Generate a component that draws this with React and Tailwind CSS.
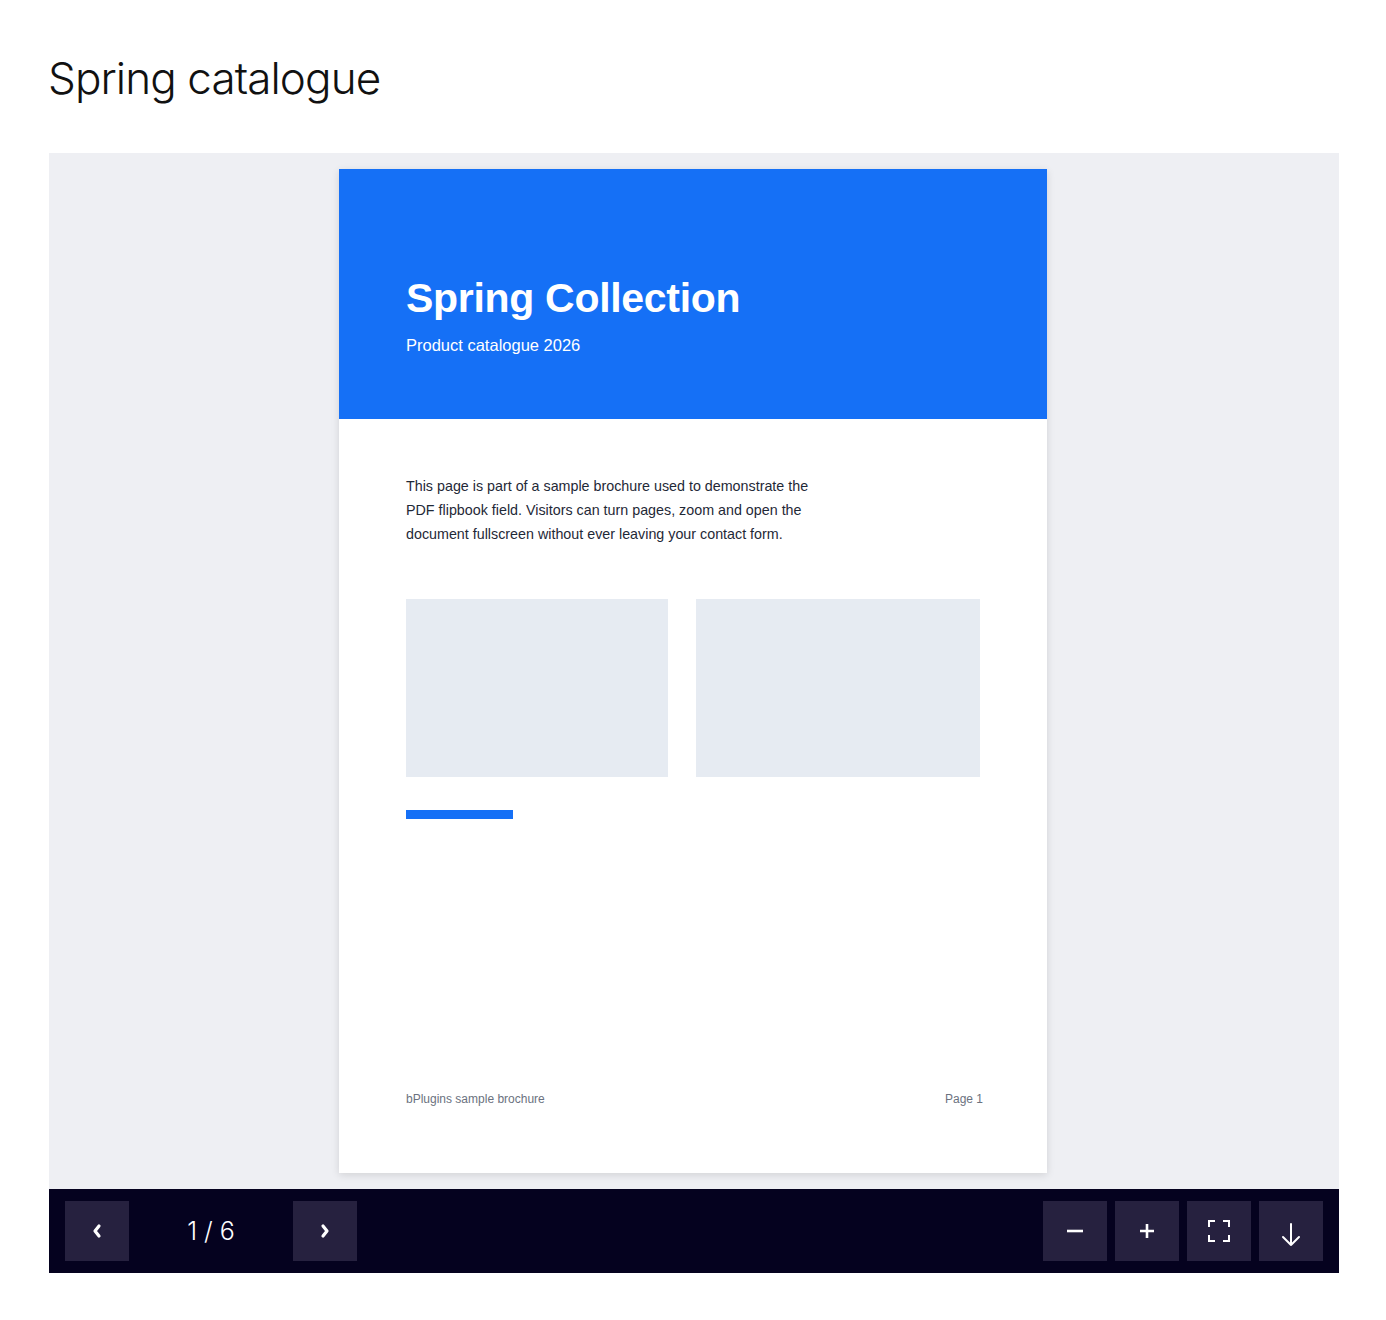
import React from "react";

const Btn = ({ children }) => (
  <button className="w-16 h-[60px] bg-[#26213f] flex items-center justify-center text-white">
    {children}
  </button>
);

export default function App() {
  return (
    <div className="bg-white min-h-[1320px] px-[49px] pt-[50px]" style={{ fontFamily: "Inter, sans-serif" }}>
      <h1 className="text-[44px] font-light text-[#111] leading-[56px] tracking-[-0.9px] -ml-[1px]">Spring catalogue</h1>
      <div className="mt-[47px] w-[1290px]">
        <div className="bg-[#eeeff3] h-[1036px] py-4 pr-[2px] flex justify-center">
          <div className="w-[708px] h-[1004px] bg-white shadow-[0_2px_8px_rgba(0,0,0,0.12)] flex flex-col" style={{ fontFamily: "'Liberation Sans', Arial, sans-serif" }}>
            <div className="h-[250px] bg-[#1570f6] pl-[67px] pt-[104px] text-white">
              <div className="text-[41px] font-bold leading-[50px] tracking-[-0.3px]">Spring Collection</div>
              <div className="text-[16.5px] mt-[12px] leading-[20px]">Product catalogue 2026</div>
            </div>
            <div className="flex-1 px-[67px] pt-[55px] pr-[64px] flex flex-col">
              <p className="text-[14.3px] leading-[24px] text-[#1f2937] w-[415px]">
                This page is part of a sample brochure used to demonstrate the PDF flipbook field. Visitors can turn pages, zoom and open the document fullscreen without ever leaving your contact form.
              </p>
              <div className="flex gap-[28px] mt-[53px]">
                <div className="w-[262px] h-[178px] bg-[#e6ebf2]"></div>
                <div className="w-[284px] h-[178px] bg-[#e6ebf2]"></div>
              </div>
              <div className="w-[107px] h-[9px] bg-[#1570f6] mt-[33px]"></div>
              <div className="flex-1"></div>
              <div className="flex justify-between text-[12px] text-[#6b7280] pb-[67px] leading-[14px]">
                <span>bPlugins sample brochure</span>
                <span>Page 1</span>
              </div>
            </div>
          </div>
        </div>
        <div className="h-[84px] bg-[#05021f] flex items-center px-4">
          <Btn>
            <svg width="12" height="16" viewBox="0 0 12 16"><path d="M8 3 L4 8 L8 13" fill="none" stroke="white" strokeWidth="3.2" strokeLinecap="round" strokeLinejoin="round" /></svg>
          </Btn>
          <div className="w-[164px] text-center text-white text-[25px] font-light leading-none">1 / 6</div>
          <Btn>
            <svg width="12" height="16" viewBox="0 0 12 16"><path d="M4 3 L8 8 L4 13" fill="none" stroke="white" strokeWidth="3.2" strokeLinecap="round" strokeLinejoin="round" /></svg>
          </Btn>
          <div className="flex-1"></div>
          <div className="flex gap-2">
            <Btn>
              <svg width="20" height="20" viewBox="0 0 20 20"><path d="M2 10 H18" stroke="white" strokeWidth="2.6" /></svg>
            </Btn>
            <Btn>
              <svg width="20" height="20" viewBox="0 0 20 20"><path d="M3 10 H17 M10 3 V17" stroke="white" strokeWidth="2.6" /></svg>
            </Btn>
            <Btn>
              <svg width="24" height="24" viewBox="0 0 24 24" fill="none" stroke="white" strokeWidth="2">
                <path d="M2 8 V2 H8 M16 2 H22 V8 M22 16 V22 H16 M8 22 H2 V16" />
              </svg>
            </Btn>
            <Btn>
              <svg width="22" height="26" viewBox="0 0 22 26" fill="none" stroke="white" strokeWidth="2" strokeLinecap="round" strokeLinejoin="round" className="mt-2">
                <path d="M11 2 V23 M3 15 L11 23 L19 15" />
              </svg>
            </Btn>
          </div>
        </div>
      </div>
    </div>
  );
}
